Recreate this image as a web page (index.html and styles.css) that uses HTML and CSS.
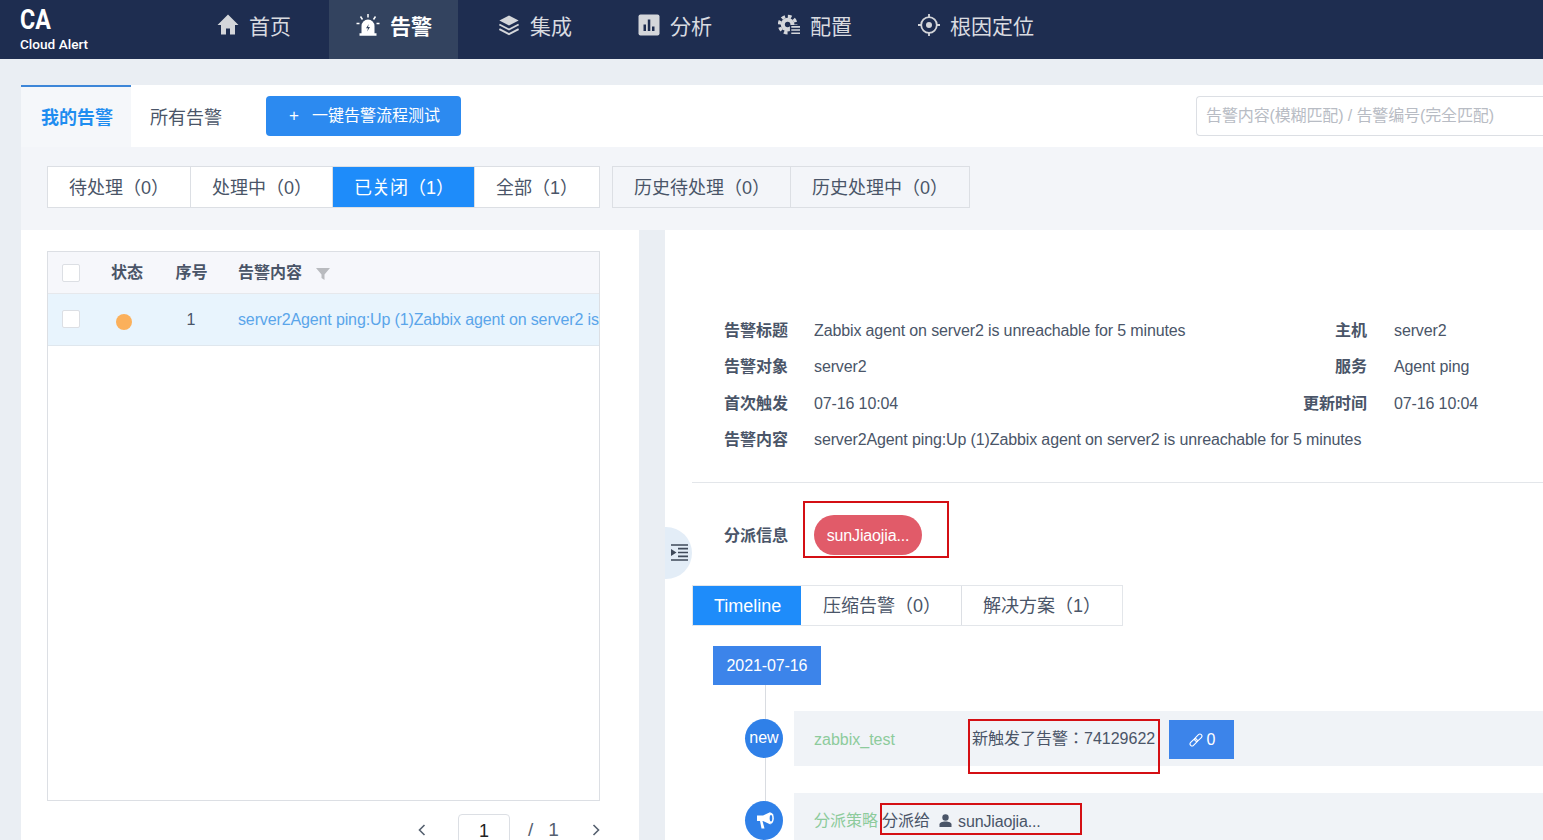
FILE: index.html
```html
<!DOCTYPE html>
<html>
<head>
<meta charset="utf-8">
<title>Cloud Alert</title>
<link rel="stylesheet" href="styles.css">
</head>
<body>
<header class="topbar">
  <div class="logo"><div class="logo-ca">CA</div><div class="logo-name">Cloud Alert</div></div>
  <nav class="nav">
    <a class="nav-item first">
      <svg class="nav-icon" viewBox="0 0 22 22"><path d="M11 .5.500 11h3.500v9.500h5v-6h4v6h5V11h3.500z" fill="#d4d6da"/></svg><span>首页</span>
    </a>
    <a class="nav-item active">
      <svg class="nav-icon" viewBox="0 0 24 24"><path d="M5.500 21v-8a6.500 6.500 0 0 1 13 0v8z" fill="#fff"/><path d="M3.500 21.500h17" stroke="#fff" stroke-width="2.500"/><path d="M12.800 11 10 15.300h2l-.8 3.200 2.800-4.400h-2z" fill="#33435f"/><path d="M12 1v3.500M4.500 3.500l2 3M19.500 3.500l-2 3M.5 10.500h3M20.500 10.500h3" stroke="#fff" stroke-width="1.500"/></svg><span>告警</span>
    </a>
    <a class="nav-item">
      <svg class="nav-icon" viewBox="0 0 24 24"><path d="M12 1.500 1.500 7 12 12.500 22.500 7z" fill="#d4d6da"/><path d="M1.500 11.500 12 17l10.500-5.500M1.500 16.500 12 22l10.500-5.500" fill="none" stroke="#d4d6da" stroke-width="2"/></svg><span>集成</span>
    </a>
    <a class="nav-item">
      <svg class="nav-icon" viewBox="0 0 22 22"><rect width="21" height="21" x=".5" y=".5" rx="2" fill="#d4d6da"/><path d="M5.500 10.500h2.500v6.500H5.500zM9.800 5.500h2.500V17H9.800zM14 12.500h2.500V17H14z" fill="#1e2d50"/></svg><span>分析</span>
    </a>
    <a class="nav-item">
      <svg class="nav-icon" viewBox="0 0 24 24"><circle cx="10.500" cy="11.500" r="7.500" fill="#d4d6da"/><circle cx="10.500" cy="11.500" r="9" fill="none" stroke="#d4d6da" stroke-width="3.500" stroke-dasharray="4 3.070"/><circle cx="10.500" cy="11.500" r="3" fill="#1e2d50"/><rect x="13" y="12" width="11" height="12" fill="#1e2d50"/><path d="M14.500 14H24M14.500 17.500H24M14.500 21H24" stroke="#d4d6da" stroke-width="1.800"/></svg><span>配置</span>
    </a>
    <a class="nav-item">
      <svg class="nav-icon" viewBox="0 0 22 22"><circle cx="11" cy="11" r="7.800" fill="none" stroke="#d4d6da" stroke-width="1.800"/><circle cx="11" cy="11" r="3" fill="#d4d6da"/><path d="M11 0v3.500M11 18.500V22M0 11h3.500M18.500 11H22" stroke="#d4d6da" stroke-width="1.800"/></svg><span>根因定位</span>
    </a>
  </nav>
</header>

<main class="page">
  <section class="tabbar">
    <div class="tab current">我的告警</div>
    <div class="tab">所有告警</div>
    <button class="test-btn"><span class="plus">+</span>一键告警流程测试</button>
    <div class="search">告警内容(模糊匹配) / 告警编号(完全匹配)</div>
  </section>

  <section class="filters">
    <div class="seg">
      <div class="seg-item w143">待处理（0）</div>
      <div class="seg-item w142">处理中（0）</div>
      <div class="seg-item w142 on">已关闭（1）</div>
      <div class="seg-item w125">全部（1）</div>
    </div>
    <div class="seg history">
      <div class="seg-item w178">历史待处理（0）</div>
      <div class="seg-item w180">历史处理中（0）</div>
    </div>
  </section>

  <section class="columns">
    <div class="list-panel">
      <div class="table">
        <div class="t-head">
          <div class="c-check"><span class="checkbox"></span></div>
          <div class="c-state">状态</div>
          <div class="c-no">序号</div>
          <div class="c-content">告警内容
            <svg class="filter-icon" viewBox="0 0 14 12"><path d="M0 0h14L8.500 6.500V12l-3-2V6.500z" fill="#b9bbbf"/></svg>
          </div>
        </div>
        <div class="t-row">
          <div class="c-check"><span class="checkbox"></span></div>
          <div class="c-state"><span class="dot"></span></div>
          <div class="c-no num">1</div>
          <div class="c-content link">server2Agent ping:Up (1)Zabbix agent on server2 is</div>
        </div>
      </div>
      <div class="pager">
        <svg class="chev" viewBox="0 0 8 12"><path d="M6.500 1 1.500 6l5 5" fill="none" stroke="#55606f" stroke-width="1.600"/></svg>
        <div class="page-input">1</div>
        <span class="slash">/</span>
        <span class="total">1</span>
        <svg class="chev" viewBox="0 0 8 12"><path d="M1.500 1l5 5-5 5" fill="none" stroke="#55606f" stroke-width="1.600"/></svg>
      </div>
    </div>

    <div class="gutter">
      <div class="collapse">
        <svg class="collapse-icon" viewBox="0 0 17 17"><path d="M0 1h17M7 4.700h10M7 8.500h10M7 12.300h10M0 16h17" stroke="#3f4a5a" stroke-width="1.700"/><path d="M0 5 5.500 8.500 0 12z" fill="#3f4a5a"/></svg>
      </div>
    </div>

    <div class="detail">
      <div class="info">
        <div class="info-row">
          <div class="info-key">告警标题</div><div class="info-val wide">Zabbix agent on server2 is unreachable for 5 minutes</div>
          <div class="info-key2">主机</div><div class="info-val">server2</div>
        </div>
        <div class="info-row">
          <div class="info-key">告警对象</div><div class="info-val wide">server2</div>
          <div class="info-key2">服务</div><div class="info-val">Agent ping</div>
        </div>
        <div class="info-row">
          <div class="info-key">首次触发</div><div class="info-val wide">07-16 10:04</div>
          <div class="info-key2">更新时间</div><div class="info-val">07-16 10:04</div>
        </div>
        <div class="info-row">
          <div class="info-key">告警内容</div><div class="info-val">server2Agent ping:Up (1)Zabbix agent on server2 is unreachable for 5 minutes</div>
        </div>
      </div>
      <div class="assign">
        <div class="info-key">分派信息</div>
        <div class="pill">sunJiaojia...</div>
        <div class="mark mark-pill"></div>
      </div>
      <div class="detail-tabs">
        <div class="seg-item dt1 on">Timeline</div>
        <div class="seg-item dt2">压缩告警（0）</div>
        <div class="seg-item dt3">解决方案（1）</div>
      </div>
      <div class="timeline">
        <div class="date">2021-07-16</div>
        <div class="tl-row first-row">
          <div class="bullet">new</div>
          <div class="tl-card">
            <span class="source s1">zabbix_test</span>
            <span class="msg">新触发了告警：74129622</span>
            <span class="link-btn"><svg class="link-icon" viewBox="0 0 14 14"><g transform="rotate(-45 7 7)" fill="none" stroke="#fff" stroke-width="1.100"><rect x="-.5" y="5" width="8.500" height="4" rx="2"/><rect x="6" y="5" width="8.500" height="4" rx="2"/></g></svg>0</span>
            <div class="mark mark-msg"></div>
          </div>
        </div>
        <div class="tl-row">
          <div class="bullet"><svg class="horn" viewBox="0 0 17 17"><path d="M0 3.500h6L13.500 0v12.500L6 9H5.500L7.500 16.500H4.500L3 9H0z" fill="#fff"/><ellipse cx="14" cy="6.200" rx="2.800" ry="5.500" fill="#fff"/><ellipse cx="14" cy="6.200" rx="1.300" ry="3.300" fill="#2f80e8"/></svg></div>
          <div class="tl-card">
            <span class="source">分派策略</span>
            <span class="assign-to">分派给</span>
            <svg class="user" viewBox="0 0 12 13"><circle cx="6" cy="3.500" r="3.200" fill="#4a5568"/><path d="M0 13v-2.500C0 8.500 2.500 7.500 6 7.500s6 1 6 3V13z" fill="#4a5568"/></svg>
            <span class="user-name">sunJiaojia...</span>
            <div class="mark mark-assign"></div>
          </div>
        </div>
      </div>
    </div>
  </section>
</main>
</body>
</html>
```
FILE: styles.css
```css
* { box-sizing: border-box; }
html, body { margin: 0; height: 840px; overflow: hidden; }
body {
  background: #eaeef3;
  color: #4a5568;
  font-family: "Liberation Sans", "Noto Sans CJK JP", sans-serif;
  font-size: 16px;
  width: 1543px;
}

/* top bar */
.topbar { height: 59px; background: #1e2d50; display: flex; color: #d9dbe0; }
.logo { width: 187px; padding: 6px 0 0 20px; color: #fff; font-family: Roboto, sans-serif; }
.logo-ca { font-size: 27px; font-weight: 700; line-height: 29px; height: 29px; transform: scaleX(.86); transform-origin: left center; }
.logo-name { font-size: 13.6px; font-weight: 500; line-height: 18px; }
.nav { display: flex; }
.nav-item { width: 129px; margin-right: 11px; padding: 0 0 9px 29px; display: flex; align-items: center; font-size: 21px; gap: 10px; height: 59px; white-space: nowrap; }
.nav-item.first { margin-right: 13px; padding-left: 30px; }
.nav-icon { width: 22px; height: 22px; flex: none; }
.nav-item.active { background: #33435f; color: #fff; font-weight: 700; padding-left: 27px; gap: 10px; }
.nav-item.active .nav-icon { width: 24px; height: 24px; }

.page { padding: 26px 0 0 21px; }

/* tab bar */
.tabbar { height: 62px; background: #fff; display: flex; align-items: center; position: relative; }
.tab { width: 110px; height: 62px; text-align: center; font-size: 18px; line-height: 66px; color: #4a5568; flex: none; }
.tab.current { background: #f5f7fa; border-top: 2px solid #3d86d8; padding-left: 2px; color: #1f8df0; font-weight: 700; line-height: 62px; }
.test-btn { margin: 0 0 0 25px; width: 195px; height: 40px; background: #2c8af0; color: #fff; border: 0; border-radius: 4px; font: 16px "Liberation Sans", "Noto Sans CJK JP", sans-serif; padding: 0 0 5px 2px; flex: none; }
.plus { margin-right: 13px; font-size: 17px; }
.search { margin-left: 735px; width: 420px; height: 40px; border: 1px solid #dcdfe4; border-radius: 4px 0 0 4px; border-right: 0; color: #b8bcc4; line-height: 38px; padding-left: 9px; white-space: nowrap; flex: none; letter-spacing: -.12px; }

/* filters */
.filters { height: 83px; padding: 19px 0 0 26px; display: flex; background: #f3f5f9; gap: 12px; }
.seg { display: flex; height: 42px; border: 1px solid #dcdfe4; background: #fff; }
.seg.history { background: #f3f5f9; }
.seg-item { display: flex; align-items: center; padding: 0 0 3px 21px; font-size: 18px; color: #4a5568; border-right: 1px solid #dcdfe4; white-space: nowrap; flex: none; }
.seg-item:last-child { border-right: 0; }
.seg-item.on { background: #1e8cfa; color: #fff; }
.w143 { width: 143px; } .w142 { width: 142px; } .w125 { width: 124px; } .w178 { width: 178px; } .w180 { width: 178px; }

/* columns */
.columns { display: flex; height: 610px; }
.list-panel { width: 618px; background: #fff; padding: 21px 39px 0 26px; flex: none; }
.table { width: 553px; height: 550px; border: 1px solid #dcdfe4; overflow: hidden; }
.t-head { height: 42px; background: #f6f7fb; border-bottom: 1px solid #e6e8ec; display: flex; align-items: center; font-size: 16px; font-weight: 700; color: #4a5568; }
.t-head .c-state, .t-head .c-no, .t-head .c-content { padding-bottom: 3px; }
.t-head .c-no { padding-left: 1px; }
.t-row { height: 52px; background: #e8f4fd; border-bottom: 1px solid #dfe7ee; display: flex; align-items: center; }
.c-check { width: 47px; padding-left: 14px; flex: none; display: flex; align-items: center; }
.checkbox { width: 18px; height: 18px; background: #fff; border: 1px solid #dcdfe4; border-radius: 2px; }
.t-row .c-check { position: relative; top: -1px; }
.c-state { width: 64px; flex: none; padding-left: 16px; }
.c-no { width: 64px; flex: none; text-align: center; }
.c-content { padding-left: 15px; white-space: nowrap; flex: none; display: flex; align-items: center; }
.link { color: #5aa5ea; letter-spacing: -.13px; padding-top: 1px; }
.num { padding-top: 1px; }
.filter-icon { width: 14px; height: 12px; margin-left: 14px; position: relative; top: 3px; }
.dot { display: block; width: 16px; height: 16px; border-radius: 50%; background: #fbb05b; margin: 4px 0 0 5px; }

.pager { display: flex; align-items: center; height: 32px; margin-top: 13px; padding-left: 371px; color: #55606f; }
.chev { width: 8px; height: 12px; flex: none; }
.page-input { width: 52px; height: 40px; align-self: flex-start; flex: none; border: 1px solid #dcdfe4; border-radius: 4px; margin: 0 18px 0 32px; text-align: center; line-height: 32px; font-size: 18px; color: #222; background: #fff; }
.slash { font-size: 19px; }
.total { font-size: 19px; margin: 0 33px 0 15px; }

.gutter { width: 26px; flex: none; position: relative; }
.collapse { position: absolute; left: 26px; top: 297px; width: 27px; height: 52px; background: #e3edf7; border-radius: 0 26px 26px 0; z-index: 2; }
.collapse-icon { position: absolute; left: 6px; top: 17px; width: 17px; height: 17px; }

/* detail */
.detail { width: 900px; background: #fff; flex: none; padding-top: 82px; position: relative; }
.info { margin-left: 27px; height: 171px; padding-top: .5px; border-bottom: 1px solid #e3e6ea; }
.info-row { display: flex; height: 36.5px; align-items: center; color: #4a5568; line-height: 20px; }
.info-key { width: 96px; flex: none; text-align: right; font-weight: 700; color: #4a5568; font-size: 16px; }
.info-key2 { width: 85px; flex: none; text-align: right; font-weight: 700; font-size: 16px; color: #4a5568; }
.info-val { margin-left: 27px; white-space: nowrap; letter-spacing: -.125px; }
.info-val.wide { width: 468px; flex: none; margin-left: 26px; }
.info-row .info-val:last-child { margin-left: 27px; }
.info-row:last-child .info-val:last-child { margin-left: 26px; }

.assign { display: flex; align-items: center; margin: 19px 0 0 28px; height: 56px; padding-top: 8px; position: relative; }
.assign .info-key { width: 95px; }
.pill { margin: 2px 0 0 26px; width: 108px; height: 40px; background: #e15b69; color: #fff; border-radius: 20px; text-align: center; line-height: 42px; font-size: 16px; letter-spacing: -.15px; }
.mark { position: absolute; border: 2px solid #d40f14; pointer-events: none; }
.mark-pill { left: 110px; top: -1px; width: 146px; height: 57px; }

.detail-tabs { display: flex; margin: 27px 0 0 27px; height: 41px; width: 431px; border: 1px solid #e3e6ea; }
.detail-tabs .seg-item { height: 39px; padding-bottom: 3px; }
.detail-tabs .dt1 { width: 108px; padding: 2px 0 0 21px; border-right: 0; }
.dt2 { width: 161px; padding-left: 21px; border-left: 0; }
.detail-tabs .dt2 { padding-left: 22px; }
.dt3 { width: 161px; }

.timeline { margin: 20px 0 0 48px; position: relative; }
.timeline::before { content: ""; position: absolute; left: 52px; top: 39px; bottom: -20px; width: 1px; background: #d9dce1; }
.date { width: 108px; height: 39px; background: #3c84ea; color: #fff; text-align: center; line-height: 40px; position: relative; letter-spacing: -.1px; }
.tl-row { position: relative; display: flex; height: 82px; margin-left: 32px; align-items: flex-start; }
.first-row { margin-top: 26px; }
.bullet { width: 38px; height: 39px; border-radius: 50%; background: #2f80e8; color: #fff; text-align: center; line-height: 37px; flex: none; margin-top: 8px; z-index: 1; display: flex; align-items: center; justify-content: center; }
.first-row .bullet { padding-bottom: 3px; }
.horn { width: 17px; height: 17px; margin-left: 2px; }
.tl-card { margin-left: 11px; width: 800px; height: 55px; background: #f0f3f7; display: flex; align-items: center; position: relative; flex: none; padding-left: 20px; line-height: 20px; }
.source { color: #8dcb9c; white-space: nowrap; flex: none; position: relative; top: 1px; }
.tl-row:last-child .source { top: 0; }
.source.s1 { width: 158px; }
.msg { position: relative; white-space: nowrap; width: 197px; flex: none; }
.link-btn { width: 65px; height: 39px; background: #3c84ea; color: #fff; display: flex; align-items: center; justify-content: center; flex: none; position: relative; top: 1px; padding: 1px 0 0 1px; }
.link-icon { width: 14px; height: 14px; margin-right: 4px; }
.assign-to { margin-left: 4px; white-space: nowrap; }
.user { width: 13px; height: 13px; margin: 0 6px 0 9px; flex: none; }
.user-name { white-space: nowrap; position: relative; top: 1px; letter-spacing: -.15px; }
.mark-msg { left: 174px; top: 8px; width: 192px; height: 55px; }
.mark-assign { left: 86px; top: 10px; width: 202px; height: 32px; }
```
